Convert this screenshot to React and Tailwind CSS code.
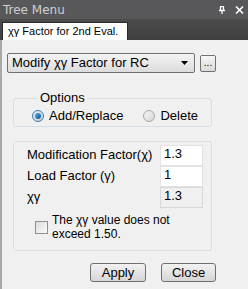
import { useState } from "react";

function Radio({ checked, label, onClick }) {
    return (
        <button onClick={onClick} className="flex items-center gap-[5px] h-[13px]">
            <span className={`w-[12px] h-[12px] rounded-full border flex items-center justify-center ${checked ? 'border-[#3d7bad] bg-gradient-to-br from-[#e6eef5] to-[#c4d2de]' : 'border-[#a6a6a6] bg-gradient-to-br from-[#f4f4f4] to-[#d6d6d6]'}`}>
                {checked && <span className="w-[6px] h-[6px] rounded-full bg-gradient-to-br from-[#5db1e8] to-[#0c4f8a]" />}
            </span>
            <span className="text-[13px] leading-[13px] text-black">{label}</span>
        </button>
    );
}

function Field({ label, value, readOnly }) {
    return (
        <div className="flex items-center justify-between h-[20px]">
            <span className="text-[13px] leading-[14px] text-black whitespace-nowrap">{label}</span>
            <div className={`w-[43px] h-[21px] border px-[3px] text-[13px] leading-[16px] text-black ${readOnly ? 'bg-[#f0f0f0] border-[#d8d8d8]' : 'bg-white border-[#e3e3e3]'}`}>
                {value}
            </div>
        </div>
    );
}

export default function App() {
    const [mode, setMode] = useState('add');
    const [limit, setLimit] = useState(false);

    return (
        <div className="w-[248px] h-[289px] flex flex-col bg-[#f0f0f0] overflow-hidden" style={{ fontFamily: '"Liberation Sans", "Noto Sans CJK KR", sans-serif' }}>
            <div className="h-[19px] bg-[#58575a] flex items-center justify-between pl-[3px] pr-[4px]">
                <span className="text-[12px] text-[#cfcfd0]" style={{ fontFamily: '"DejaVu Sans", sans-serif' }}>Tree Menu</span>
                <div className="flex items-center gap-[9px]">
                    <svg width="8" height="8" viewBox="0 0 8 8" className="text-white">
                        <path d="M2 0.5h4M2.5 0.5v4M5.5 0.5v4M1 4.5h6M4 4.5v3.5" stroke="currentColor" strokeWidth="1.3" fill="none" />
                    </svg>
                    <svg width="9" height="8" viewBox="0 0 9 8">
                        <path d="M1 0.5l7 7M8 0.5l-7 7" stroke="white" strokeWidth="1.6" />
                    </svg>
                </div>
            </div>
            <div className="h-[21px] bg-gradient-to-b from-[#4c4c4c] to-[#3f3f3f] flex items-end pl-[2px]">
                <div className="h-[18px] w-[126px] bg-white border border-b-0 border-[#2a2a2a] rounded-t-[1px] flex items-center pl-[5px]">
                    <span className="text-[11px] text-black whitespace-nowrap">χγ Factor for 2nd Eval.</span>
                </div>
            </div>
            <div className="flex-1 border-l-2 border-[#a9a9a9] flex flex-col pl-[5px]">
                <div className="mt-[13px] flex items-center gap-[5px]">
                    <div className="w-[188px] h-[20px] rounded-[2px] border border-[#707070] bg-gradient-to-b from-[#f4f4f4] to-[#dcdcdc] flex items-center justify-between pl-[4px] pr-[6px]">
                        <span className="text-[13px] text-black whitespace-nowrap">Modify χγ Factor for RC</span>
                        <svg width="7" height="4" viewBox="0 0 7 4"><path d="M0 0h7L3.5 4z" fill="black" /></svg>
                    </div>
                    <button className="w-[16px] h-[17px] rounded-[2px] border border-[#707070] bg-gradient-to-b from-[#f6f6f6] to-[#dadada] text-[10px] leading-[10px] text-black flex items-end justify-center pb-[3px]">...</button>
                </div>

                <fieldset className="mt-[18px] ml-[6px] w-[199px] border border-[#d5dfe5] rounded-[3px] pl-[18px] pt-[4px] pb-[4px] min-w-0">
                    <legend className="ml-[6px] px-[2px] text-[13px] leading-[14px] text-black">Options</legend>
                    <div className="flex items-center gap-[20px]">
                        <Radio checked={mode === 'add'} label="Add/Replace" onClick={() => setMode('add')} />
                        <Radio checked={mode === 'delete'} label="Delete" onClick={() => setMode('delete')} />
                    </div>
                </fieldset>

                <div className="mt-[14px] ml-[6px] w-[199px] h-[110px] border border-[#d5dfe5] rounded-[3px] pt-[3px] pl-[13px] pr-[8px] flex flex-col gap-[1px]">
                    <Field label="Modification Factor(χ)" value="1.3" />
                    <Field label="Load Factor (γ)" value="1" />
                    <Field label="χγ" value="1.3" readOnly />
                    <div className="mt-[5px] ml-[8px] flex items-center gap-[4px]">
                        <button onClick={() => setLimit(!limit)} className="w-[13px] h-[13px] border border-[#8f8f8f] bg-gradient-to-br from-[#dcdcdc] to-[#fbfbfb] flex items-center justify-center shrink-0">
                            {limit && <span className="text-[10px] leading-[10px]">✓</span>}
                        </button>
                        <div className="flex flex-col text-[12px] leading-[14px] text-black">
                            <span>The χγ value does not</span>
                            <span>exceed 1.50.</span>
                        </div>
                    </div>
                </div>

                <div className="mt-[12px] flex justify-end gap-[15px] pr-[32px]">
                    <button className="w-[56px] h-[19px] rounded-[3px] border border-[#707070] bg-gradient-to-b from-[#f2f2f2] to-[#d6d6d6] text-[13px] leading-[13px] text-black">Apply</button>
                    <button className="w-[55px] h-[19px] rounded-[3px] border border-[#707070] bg-gradient-to-b from-[#f2f2f2] to-[#d6d6d6] text-[13px] leading-[13px] text-black">Close</button>
                </div>
            </div>
        </div>
    );
}
